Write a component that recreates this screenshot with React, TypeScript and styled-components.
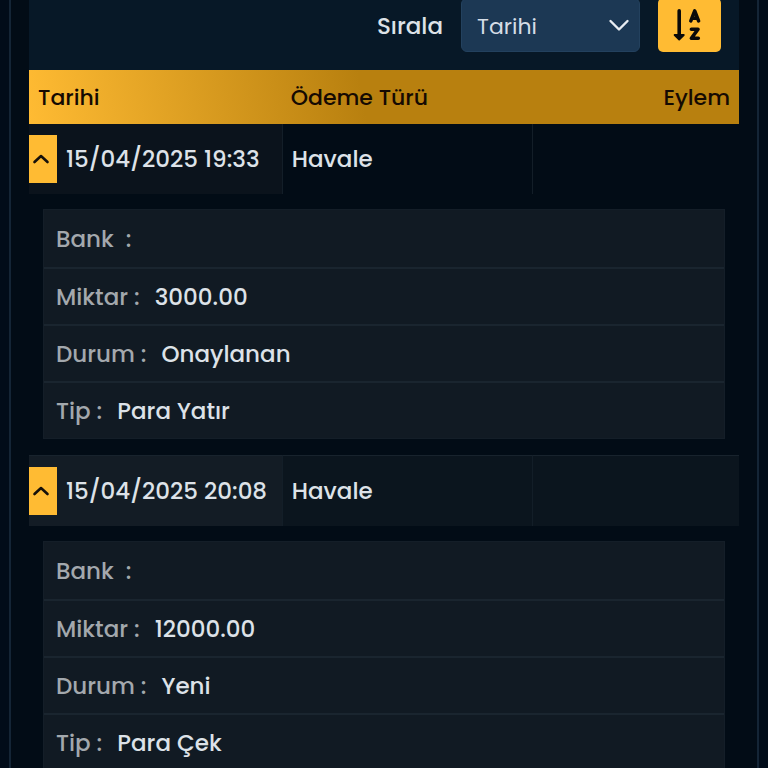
import React, { Fragment, useState } from "react";
import styled, { createGlobalStyle } from "styled-components";

const GlobalStyle = createGlobalStyle`
  *, *::before, *::after { box-sizing: border-box; }
  html { background: #010c19; }
  body {
    margin: 0;
    color: #dde2e8;
    font-family: Poppins, Inter, sans-serif;
    font-size: 23px;
    font-weight: 500;
    overflow-x: hidden;
  }
`;

const Panel = styled.main`
  margin: 0 9px;
  padding: 0 18px;
  background: #020c16;
  border: solid #142536;
  border-width: 0 2px;
`;

const Toolbar = styled.div`
  display: flex;
  align-items: flex-start;
  justify-content: flex-end;
  gap: 18px;
  margin-top: -2px;
  padding: 0 18px 16px 0;
  background: #071827;
`;

const SortLabel = styled.label`
  line-height: 56px;
`;

const SelectBox = styled.div`
  display: grid;
  align-items: center;
  width: 179px;
  height: 54px;

  > * { grid-area: 1 / 1; }

  > svg {
    justify-self: end;
    margin-right: 10px;
    pointer-events: none;
  }
`;

const SortSelect = styled.select`
  appearance: none;
  width: 100%;
  height: 100%;
  padding: 2px 40px 0 15px;
  border: 1px solid #23415e;
  border-radius: 6px;
  background: #1c3854;
  color: #d5dde6;
  font: inherit;
  font-size: 22px;
  font-weight: 400;
`;

const OrderButton = styled.button`
  display: grid;
  place-items: center;
  width: 63px;
  height: 54px;
  padding: 0 6px 0 0;
  border: 0;
  border-radius: 5px;
  background: #ffbb33;
  color: #0a0a0a;
`;

const Table = styled.table`
  width: 100%;
  table-layout: fixed;
  border-collapse: separate;
  border-spacing: 0;
`;

const HeadRow = styled.tr`
  background: linear-gradient(80deg, #ffbb33 0%, #b8800f 47%);
  color: #150a02;
`;

const HeadCell = styled.th<{ $width: string; $align?: "left" | "right" }>`
  width: ${(p) => p.$width};
  height: 54px;
  padding: 0 9px;
  font-size: 22px;
  font-weight: 500;
  text-align: ${(p) => p.$align ?? "left"};
`;

const Row = styled.tr<{ $striped: boolean }>`
  background: ${(p) => (p.$striped ? "#0b151e" : "transparent")};
`;

const Cell = styled.td<{ $lead?: boolean; $striped: boolean }>`
  height: ${(p) => (p.$striped ? 71 : 70)}px;
  padding: ${(p) => (p.$lead ? "0" : "0 9px")};
  background: ${(p) => (p.$lead ? (p.$striped ? "#131c25" : "#0b131c") : "transparent")};
  border-top: ${(p) => (p.$striped ? "1px solid #18232d" : "0")};

  & + & { border-left: 1px solid ${(p) => (p.$striped ? "#131e28" : "#0c1620")}; }
`;

const LeadContent = styled.div`
  display: flex;
  align-items: center;
  gap: 9px;
  white-space: nowrap;
`;

const ToggleButton = styled.button`
  display: grid;
  place-items: center;
  flex: none;
  width: 28px;
  height: 48px;
  padding: 0 4px 0 0;
  border: 0;
  background: #ffbb33;
  color: #16100a;
`;

const DetailCell = styled.td`
  padding: 15px 14px 16px;
`;

const DetailList = styled.dl`
  margin: 0;
  background: #111a23;
  border: 1px solid #141e28;
`;

const DetailItem = styled.div`
  display: flex;
  align-items: center;
  gap: 15px;
  height: 57px;
  padding: 0 12px;

  & + & {
    border-top: 2px solid #1a252f;
  }
`;

const Term = styled.dt`
  color: #a3a8ad;
  white-space: pre;
`;

const Value = styled.dd`
  margin: 0;
`;

const ChevronDown = () => (
  <svg width="22" height="14" viewBox="0 0 22 14" fill="none" aria-hidden="true">
    <path d="M2.500 3L11 11.500L19.500 3" stroke="#e8edf2" strokeWidth="2.400" strokeLinecap="round" strokeLinejoin="round" />
  </svg>
);

const ChevronUp = ({ open }: { open: boolean }) => (
  <svg width="18" height="12" viewBox="0 0 18 12" fill="none" aria-hidden="true">
    <path
      d={open ? "M2.500 9L9 3L15.500 9" : "M2.500 3L9 9L15.500 3"}
      stroke="currentColor"
      strokeWidth="2.600"
      strokeLinecap="round"
      strokeLinejoin="round"
    />
  </svg>
);

const SortIcon = () => (
  <svg width="28" height="34" viewBox="0 0 28 34" fill="none" aria-hidden="true">
    <path d="M6.200 2.700V27" stroke="currentColor" strokeWidth="3.600" strokeLinecap="round" />
    <path d="M1.600 27H10.800L6.200 31.500Z" fill="currentColor" stroke="currentColor" strokeWidth="1.800" strokeLinejoin="round" />
    <path d="M17.800 12.900L21.700 2.900L25.600 12.900M19.200 10.300H24.200" stroke="currentColor" strokeWidth="3.500" strokeLinecap="round" strokeLinejoin="round" />
    <path d="M18.400 21.200H25L18.400 30.300H25.300" stroke="currentColor" strokeWidth="3.600" strokeLinecap="round" strokeLinejoin="round" />
  </svg>
);

interface Transaction {
  date: string;
  method: string;
  details: { term: string; value: string }[];
}

const transactions: Transaction[] = [
  {
    date: "15/04/2025 19:33",
    method: "Havale",
    details: [
      { term: "Bank  :", value: "" },
      { term: "Miktar :", value: "3000.00" },
      { term: "Durum :", value: "Onaylanan" },
      { term: "Tip :", value: "Para Yatır" },
    ],
  },
  {
    date: "15/04/2025 20:08",
    method: "Havale",
    details: [
      { term: "Bank  :", value: "" },
      { term: "Miktar :", value: "12000.00" },
      { term: "Durum :", value: "Yeni" },
      { term: "Tip :", value: "Para Çek" },
    ],
  },
];

function TransactionRows({ item, striped }: { item: Transaction; striped: boolean }) {
  const [open, setOpen] = useState(true);
  return (
    <Fragment>
      <Row $striped={striped}>
        <Cell $lead $striped={striped}>
          <LeadContent>
            <ToggleButton type="button" aria-expanded={open} aria-label={item.date} onClick={() => setOpen(!open)}>
              <ChevronUp open={open} />
            </ToggleButton>
            {item.date}
          </LeadContent>
        </Cell>
        <Cell $striped={striped}>{item.method}</Cell>
        <Cell $striped={striped} />
      </Row>
      {open && (
        <tr>
          <DetailCell colSpan={3}>
            <DetailList>
              {item.details.map((d) => (
                <DetailItem key={d.term}>
                  <Term>{d.term}</Term>
                  <Value>{d.value}</Value>
                </DetailItem>
              ))}
            </DetailList>
          </DetailCell>
        </tr>
      )}
    </Fragment>
  );
}

export default function App() {
  return (
    <>
      <GlobalStyle />
      <Panel>
        <Toolbar>
          <SortLabel htmlFor="sort">Sırala</SortLabel>
          <SelectBox>
            <SortSelect id="sort" defaultValue="date">
              <option value="date">Tarihi</option>
              <option value="method">Ödeme Türü</option>
            </SortSelect>
            <ChevronDown />
          </SelectBox>
          <OrderButton type="button" aria-label="Sırala">
            <SortIcon />
          </OrderButton>
        </Toolbar>
        <Table>
          <thead>
            <HeadRow>
              <HeadCell scope="col" $width="35.6%">Tarihi</HeadCell>
              <HeadCell scope="col" $width="35.2%">Ödeme Türü</HeadCell>
              <HeadCell scope="col" $width="29.2%" $align="right">Eylem</HeadCell>
            </HeadRow>
          </thead>
          <tbody>
            {transactions.map((t, i) => (
              <TransactionRows key={t.date} item={t} striped={i % 2 === 1} />
            ))}
          </tbody>
        </Table>
      </Panel>
    </>
  );
}
